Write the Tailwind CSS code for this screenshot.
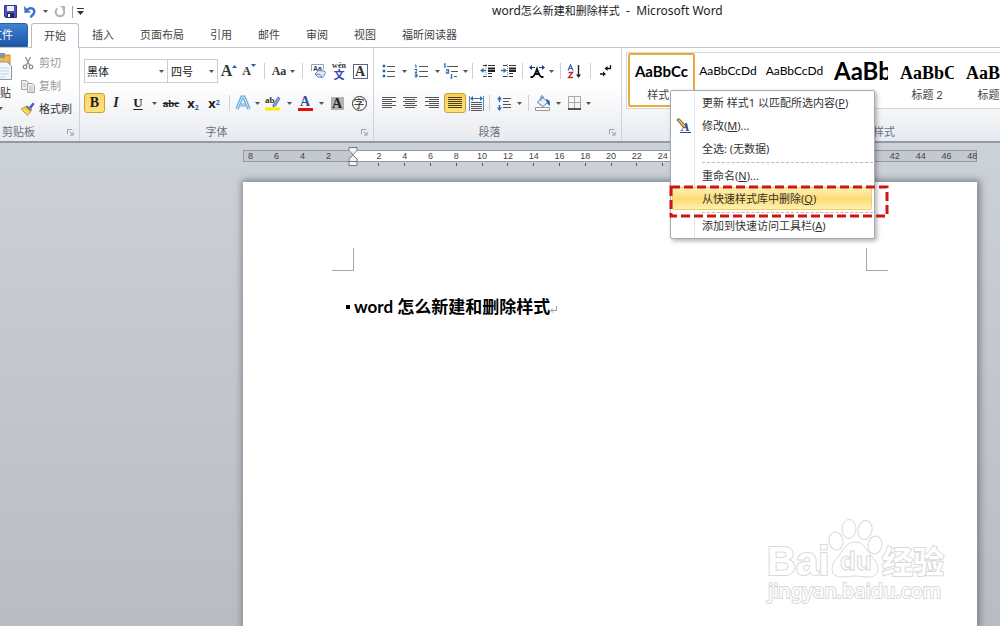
<!DOCTYPE html>
<html lang="zh-CN">

<head>
  <meta charset="UTF-8" />
  <meta name="viewport" content="width=device-width, initial-scale=1.0" />
  <title>word怎么新建和删除样式 - Microsoft Word</title>
  <script src="https://cdn.jsdelivr.net/npm/@tailwindcss/browser@4"></script>
</head>

<body class="h-screen overflow-hidden flex flex-col bg-white text-[#444] text-[11px] leading-4 font-['Noto_Sans','Noto_Sans_CJK_SC',sans-serif]">

  <!-- shared icons -->
  <svg class="hidden">
    <symbol id="arrow" viewBox="0 0 5 3"><path d="M0 0h5L2.500 3z" fill="#555" /></symbol>
    <symbol id="launcher" viewBox="0 0 8 8">
      <path d="M.5 6V.5H6" fill="none" stroke="#8a909b" />
      <path d="M3 3l3 3M7 3.500V7H3.500" fill="none" stroke="#8a909b" />
    </symbol>
  </svg>

  <!-- title bar -->
  <header class="relative h-[23px] shrink-0 flex items-center">
    <div class="flex items-center pl-[3px]">
      <button aria-label="保存" class="w-[14px] h-5 grid place-items-center">
        <svg class="w-[13px] h-[13px]" viewBox="0 0 13 13">
          <path d="M.5.5h12v12h-11l-1-1z" fill="#4b52b8" stroke="#30368c" />
          <path d="M3 1h7v5H3z" fill="#eef2fb" />
          <path d="M3 8h7v5H3z" fill="#25295f" />
          <path d="M4 9h2v3H4z" fill="#fff" />
        </svg>
      </button>
      <button aria-label="撤消" class="w-[26px] h-5 grid place-items-center">
        <svg class="w-3 h-3" viewBox="0 0 12 12">
          <path d="M3 4C6 1 10.500 2 10.300 6c-.3 2.500-2 3.500-4 5.200" fill="none" stroke="#3f74c8" stroke-width="2.400" />
          <path d="M0 0l.5 7 6.500-.5z" fill="#3f74c8" />
        </svg>
      </button>
      <svg class="w-[5px] h-[3px]"><use href="#arrow" /></svg>
      <button aria-label="恢复" class="w-6 h-5 grid place-items-center">
        <svg class="w-3 h-3" viewBox="0 0 12 12">
          <path d="M3.500 2.500a4.300 4.300 0 1 0 5.500.5" fill="none" stroke="#b4b4b4" stroke-width="2" />
          <path d="M6 0h5v5z" fill="#b4b4b4" />
        </svg>
      </button>
      <span class="w-px h-3 bg-gray-400"></span>
      <button aria-label="自定义快速访问工具栏" class="w-[14px] h-5 grid place-items-center">
        <svg class="w-[7px] h-[7px]" viewBox="0 0 7 7"><path d="M0 0h7v1H0zM0 3h7L3.500 7z" fill="#333" /></svg>
      </button>
    </div>
    <h1 class="absolute left-[492px] top-[3px] text-xs text-[#222] whitespace-pre">word<span class="text-[11px]">怎么新建和删除样式</span>  -  Microsoft Word</h1>
  </header>

  <!-- tabs -->
  <nav class="h-[25px] shrink-0 flex items-stretch border-b border-[#c3c7cd]">
    <button class="-ml-6 w-[52px] mr-[3px] rounded-tr-[3px] text-white bg-linear-to-b from-[#3f83d3] to-[#1c55a8] border border-[#2a60aa]">文件</button>
    <button class="w-12 -mb-px rounded-t-[3px] bg-white border border-b-0 border-[#b9bdc4]">开始</button>
    <button class="px-[13px]">插入</button>
    <button class="px-[13px]">页面布局</button>
    <button class="px-[13px]">引用</button>
    <button class="px-[13px]">邮件</button>
    <button class="px-[13px]">审阅</button>
    <button class="px-[13px]">视图</button>
    <button class="px-[13px]">福昕阅读器</button>
  </nav>

  <!-- ribbon -->
  <div class="h-[95px] shrink-0 flex overflow-hidden bg-linear-to-b from-white from-40% to-[#e7eaef] border-b-2 border-[#949aa5]">

    <!-- clipboard -->
    <section class="w-[80px] shrink-0 flex flex-col border-r border-[#cfd3d9]">
      <div class="h-[75px] flex">
        <button class="-ml-3 w-6 pt-1 flex flex-col items-center text-[#333]">
          <svg class="w-6 h-7 shrink-0" viewBox="0 0 24 28">
            <path d="M1 3h21v22H1z" fill="#f3b54c" stroke="#c98a2b" />
            <path d="M7 1h10v5H7z" fill="#8f949c" />
            <path d="M9 10h10l4.500 4v13.500H9z" fill="#f4f8fd" stroke="#8797ad" />
            <path d="M11 16h10M11 19h10M11 22h10M11 25h7" stroke="#c3cfde" />
          </svg>
          <span class="mt-[5px] whitespace-nowrap">粘贴</span>
          <svg class="w-[5px] h-[3px] mt-[6px]"><use href="#arrow" /></svg>
        </button>
        <div class="pl-[9px] pt-[3px] flex flex-col">
          <button class="h-[23px] flex items-center gap-1 text-[#999]">
            <svg class="w-[14px] h-[14px]" viewBox="0 0 14 14" fill="none" stroke="#8d8d8d" stroke-width="1.300">
              <path d="M4.500 1l4.500 9M9.500 1L5 10" />
              <circle cx="4" cy="11" r="1.800" /><circle cx="10" cy="11" r="1.800" />
            </svg>剪切
          </button>
          <button class="h-[23px] flex items-center gap-1 text-[#999]">
            <svg class="w-[14px] h-[14px]" viewBox="0 0 14 14" fill="#eee" stroke="#a5a5a5">
              <path d="M.5 1.500h5l2 2v7h-7z" />
              <path d="M6.500 4.500h5l2 2v7h-7z" />
              <path d="M8 8h4M8 10h4M8 12h4M2 5h3M2 7h3" stroke="#bbb" />
            </svg>复制
          </button>
          <button class="h-[23px] flex items-center gap-1 text-[#333]">
            <svg class="w-[14px] h-[14px]" viewBox="0 0 14 14">
              <path d="M8 5l4-4.500 1.500 1.500L10 7z" fill="#4a5aa8" />
              <path d="M6 3.500L11 8 9.500 9.500 4.500 5z" fill="#666b77" />
              <path d="M4.500 4.500L10 9.500 6.500 13.500 0 7z" fill="#f0cc50" stroke="#b38a28" stroke-width=".7" />
              <path d="M3 7.500l4 4" stroke="#fff3b8" />
            </svg>格式刷
          </button>
        </div>
      </div>
      <div class="h-4 mt-px pl-[2px] pr-[5px] flex items-center justify-between text-[#6b7180]">剪贴板
        <svg class="w-[7px] h-[7px]"><use href="#launcher" /></svg>
      </div>
    </section>

    <!-- font -->
    <section class="w-[294px] shrink-0 pl-1 flex flex-col border-r border-[#cfd3d9]">
      <div class="mt-[11px] h-6 flex items-center text-[#333] font-['Liberation_Serif',serif]">
        <div class="relative w-[84px]">
          <select aria-label="字体" class="w-full h-6 pl-[2px] appearance-none bg-white border border-[#c9cdd4] text-[11px] text-[#222] font-['Noto_Sans_CJK_SC',sans-serif]"><option>黑体</option></select>
          <svg class="absolute right-1 top-[11px] w-[5px] h-[3px]"><use href="#arrow" /></svg>
        </div>
        <div class="relative w-[50px]">
          <select aria-label="字号" class="w-full h-6 pl-[3px] appearance-none bg-white border border-l-0 border-[#c9cdd4] text-[11px] text-[#222] font-['Noto_Sans_CJK_SC',sans-serif]"><option>四号</option></select>
          <svg class="absolute right-1 top-[11px] w-[5px] h-[3px]"><use href="#arrow" /></svg>
        </div>
        <button aria-label="增大字体" class="w-[22px] flex justify-center text-base leading-5 font-bold">A<svg class="w-[5px] h-[3px] mt-1 rotate-180" viewBox="0 0 5 3"><path d="M0 0h5L2.500 3z" fill="#2c5aa8" /></svg></button>
        <button aria-label="缩小字体" class="w-[18px] flex justify-center text-xs font-bold">A<svg class="w-[5px] h-[3px] mt-px" viewBox="0 0 5 3"><path d="M0 0h5L2.500 3z" fill="#2c5aa8" /></svg></button>
        <span class="w-3 flex justify-center"><i class="w-px h-4 bg-[#cdd1d8]"></i></span>
        <button aria-label="更改大小写" class="w-[18px] text-xs font-bold">Aa</button>
        <span class="w-2 flex justify-center"><svg class="w-[5px] h-[3px]"><use href="#arrow" /></svg></span>
        <span class="w-3 flex justify-center"><i class="w-px h-4 bg-[#cdd1d8]"></i></span>
        <button aria-label="清除格式" class="w-5 flex justify-center">
          <svg class="w-4 h-4" viewBox="0 0 16 16">
            <path d="M1.500 8V1.500h12v5" fill="none" stroke="#8fa3bd" />
            <text x="3" y="8" font-size="7" font-weight="bold" fill="#345" font-family="'Liberation Sans', sans-serif">Aa</text>
            <path d="M5 11l3.500-3.500L14 8c2 .5 1.500 2.500.5 4l-2 2.500L8 14z" fill="#dfe9f8" stroke="#6d88b8" />
            <path d="M5 11l5 .5 2 3" fill="none" stroke="#6d88b8" />
          </svg>
        </button>
        <button aria-label="拼音指南" class="w-[22px] flex flex-col items-center leading-none">
          <span class="h-[6px] text-[8px] leading-[6px] font-bold">wén</span>
          <span class="h-[11px] text-[11px] leading-[11px] font-bold text-[#3a48b0] font-['Noto_Sans_CJK_SC',sans-serif]">文</span>
        </button>
        <button aria-label="字符边框" class="w-5 flex justify-center"><span class="w-[15px] h-[15px] border border-[#556a80] text-sm leading-[14px] font-bold">A</span></button>
      </div>
      <div class="mt-[10px] h-5 flex items-center text-[#222] font-['Liberation_Serif',serif]">
        <button aria-label="加粗" class="w-[21px] h-5 rounded-[3px] border border-[#c9a13c] bg-linear-to-b from-[#fbd767] to-[#ffe27a] text-sm leading-4 font-black">B</button>
        <button aria-label="倾斜" class="w-[22px] text-sm italic font-bold">I</button>
        <button aria-label="下划线" class="w-[22px] text-[13px] font-bold underline underline-offset-2">U</button>
        <span class="w-[10px] flex justify-center"><svg class="w-[5px] h-[3px]"><use href="#arrow" /></svg></span>
        <button aria-label="删除线" class="w-6 text-[11px] font-bold line-through">abc</button>
        <button aria-label="下标" class="w-5 text-[13px] font-bold font-['Noto_Sans',sans-serif]">x<sub class="text-[7px] text-[#2c5aa8]">2</sub></button>
        <button aria-label="上标" class="w-[22px] text-[13px] font-bold font-['Noto_Sans',sans-serif]">x<sup class="text-[7px] text-[#2c5aa8]">2</sup></button>
        <span class="w-2 flex justify-center"><i class="w-px h-4 bg-[#cdd1d8]"></i></span>
        <button aria-label="文本效果" class="w-5 flex justify-center">
          <svg class="w-4 h-4" viewBox="0 0 16 16" fill="none" stroke-linejoin="round">
            <path d="M2 14L7 2h2l5 12M5 10h6" stroke="#a8d0ee" stroke-width="4" />
            <path d="M2 14L7 2h2l5 12M5 10h6" stroke="#4a94cf" stroke-width="2.200" />
            <path d="M2 14L7 2h2l5 12M5 10h6" stroke="#eef7fd" />
          </svg>
        </button>
        <span class="w-2 flex justify-center"><svg class="w-[5px] h-[3px]"><use href="#arrow" /></svg></span>
        <button aria-label="突出显示" class="w-6 flex justify-center">
          <svg class="w-4 h-4" viewBox="0 0 16 16">
            <text x="0" y="8" font-size="9" font-weight="bold" fill="#333">ab</text>
            <path d="M8 10l5-8 2 1.500-4.500 7.500L8 12z" fill="#8ba4cf" stroke="#4d6699" stroke-width=".8" />
            <path d="M0 12.500h15v3H0z" fill="#f7ee00" />
          </svg>
        </button>
        <span class="w-2 flex justify-center"><svg class="w-[5px] h-[3px]"><use href="#arrow" /></svg></span>
        <button aria-label="字体颜色" class="w-6 flex flex-col items-center">
          <span class="h-3 text-sm leading-3 font-bold text-[#2f4f8f]">A</span>
          <span class="w-[15px] h-[3px] bg-[#e80c0c]"></span>
        </button>
        <span class="w-2 flex justify-center"><svg class="w-[5px] h-[3px]"><use href="#arrow" /></svg></span>
        <button aria-label="字符底纹" class="w-6 flex justify-center"><span class="w-[13px] h-[13px] bg-[#b3b3b3] text-sm leading-[13px] font-bold">A</span></button>
        <button aria-label="带圈字符" class="w-5 flex justify-center"><span class="w-[15px] h-[15px] rounded-full border border-[#333] text-[11px] leading-[12px] font-['Noto_Sans_CJK_SC',sans-serif]">字</span></button>
      </div>
      <div class="mt-[11px] h-4 pr-[5px] flex items-center text-[#6b7180]">
        <span class="grow pr-3 text-center">字体</span>
        <svg class="w-[7px] h-[7px]"><use href="#launcher" /></svg>
      </div>
    </section>

    <!-- paragraph -->
    <section class="w-[248px] shrink-0 pl-1 flex flex-col border-r border-[#cfd3d9]">
      <div class="mt-[11px] h-6 flex items-center">
        <button aria-label="项目符号" class="w-[22px] flex justify-center">
          <svg class="w-[14px] h-[14px]" viewBox="0 0 14 14">
            <path d="M1 1h2v2H1zM1 6h2v2H1zM1 11h2v2H1z" fill="#2f5fb0" stroke="#2f5fb0" stroke-width=".6" />
            <path d="M5 2.500h8M5 7.500h8M5 12.500h8" stroke="#555" />
          </svg>
        </button>
        <span class="w-2 flex justify-center"><svg class="w-[5px] h-[3px]"><use href="#arrow" /></svg></span>
        <button aria-label="编号" class="w-[26px] flex justify-center">
          <svg class="w-[14px] h-[14px]" viewBox="0 0 14 14" fill="none">
            <path d="M1 1h1v3M.5 5.500H3v1.200L1 8.500h2M.5 10H3v3H.5M1 11.500h2" stroke="#2f5fb0" />
            <path d="M5 2.500h9M5 7.500h9M5 12.500h9" stroke="#555" />
          </svg>
        </button>
        <span class="w-[6px] flex justify-center"><svg class="w-[5px] h-[3px]"><use href="#arrow" /></svg></span>
        <button aria-label="多级列表" class="w-[22px] flex justify-center">
          <svg class="w-4 h-4" viewBox="0 0 16 16" fill="none">
            <path d="M1 1h1v4M3 7h2.500v3H3.500V8.500M8.500 11v4M7.500 15h2" stroke="#2f6fc0" stroke-width="1.300" />
            <path d="M4 3.500h11M8 8.500h7M11 13.500h3" stroke="#555" />
          </svg>
        </button>
        <span class="w-[6px] flex justify-center"><svg class="w-[5px] h-[3px]"><use href="#arrow" /></svg></span>
        <span class="w-2 flex justify-center"><i class="w-px h-4 bg-[#cdd1d8]"></i></span>
        <button aria-label="减少缩进量" class="w-[22px] flex justify-center">
          <svg class="w-[15px] h-[14px]" viewBox="0 0 15 14">
            <path d="M3 1.500h4M8 1.500h7M3 12.500h4M8 12.500h4M8 9.500h4" stroke="#333" />
            <path d="M8 4.500h7M8 7h7" stroke="#222" stroke-width="2" />
            <path d="M6 0v14" stroke="#888" stroke-dasharray="1 1" />
            <path d="M0 6.500L3.500 4v5z" fill="#2f6fc0" /><path d="M2 6.500h4" stroke="#2f6fc0" stroke-width="1.500" />
          </svg>
        </button>
        <button aria-label="增加缩进量" class="w-5 flex justify-center">
          <svg class="w-[15px] h-[14px]" viewBox="0 0 15 14">
            <path d="M2 1.500h4M8 1.500h7M2 12.500h4M8 12.500h4M8 9.500h4" stroke="#333" />
            <path d="M8 4.500h7M8 7h7" stroke="#222" stroke-width="2" />
            <path d="M6.500 0v14" stroke="#888" stroke-dasharray="1 1" />
            <path d="M6 6.500L2.500 4v5z" fill="#2f6fc0" /><path d="M0 6.500h4" stroke="#2f6fc0" stroke-width="1.500" />
          </svg>
        </button>
        <span class="w-2 flex justify-center"><i class="w-px h-4 bg-[#cdd1d8]"></i></span>
        <button aria-label="中文版式" class="w-[22px] flex justify-center">
          <svg class="w-4 h-[13px]" viewBox="0 0 16 13" fill="none">
            <path d="M1.500 12h2c2-1 3.500-5 4.500-8 1 3 2.500 7 4.500 8h2M5 9h6" stroke="#111" stroke-width="1.900" />
            <path d="M0 2.500L3 0v5zM16 2.500L13 0v5z" fill="#23358a" /><path d="M2 2.500h4M10 2.500h4" stroke="#23358a" />
          </svg>
        </button>
        <span class="w-[6px] flex justify-center"><svg class="w-[5px] h-[3px]"><use href="#arrow" /></svg></span>
        <span class="w-3 flex justify-center"><i class="w-px h-4 bg-[#cdd1d8]"></i></span>
        <button aria-label="排序" class="w-4 flex justify-center">
          <svg class="w-[15px] h-[15px]" viewBox="0 0 15 15" fill="none">
            <path d="M1 6.500L3.500 1 6 6.500M2 4.500h3" stroke="#2f5fb0" stroke-width="1.200" />
            <path d="M1.500 8.500h4l-4 5h4.500" stroke="#b03030" stroke-width="1.300" />
            <path d="M11.500 1v11" stroke="#222" stroke-width="1.400" /><path d="M9 10.500h5L11.500 14z" fill="#222" />
          </svg>
        </button>
        <span class="w-4 flex justify-center"><i class="w-px h-4 bg-[#cdd1d8]"></i></span>
        <button aria-label="显示编辑标记" class="w-4 flex justify-center">
          <svg class="w-3 h-3" viewBox="0 0 12 12" fill="none" stroke="#111" stroke-width="1.300">
            <path d="M10.500 0v3.500H6M0 9h4" /><path d="M7.500 1L4.500 3.500l3 2.500zM3 6.500L6 9l-3 2.500z" fill="#111" stroke="none" />
          </svg>
        </button>
      </div>
      <div class="mt-[10px] h-5 flex items-center">
        <button aria-label="左对齐" class="w-[22px] flex justify-center"><svg class="w-[14px] h-[12px]" viewBox="0 0 14 12"><path d="M0 .5h14M0 2.500h10M0 4.500h14M0 6.500h10M0 8.500h14M0 10.500h10" stroke="#555" /></svg></button>
        <button aria-label="居中" class="w-5 flex justify-center"><svg class="w-[14px] h-[12px]" viewBox="0 0 14 12"><path d="M0 .5h14M2 2.500h10M0 4.500h14M2 6.500h10M0 8.500h14M2 10.500h10" stroke="#555" /></svg></button>
        <button aria-label="右对齐" class="w-6 flex justify-center"><svg class="w-[14px] h-[12px]" viewBox="0 0 14 12"><path d="M0 .5h14M4 2.500h10M0 4.500h14M4 6.500h10M0 8.500h14M4 10.500h10" stroke="#555" /></svg></button>
        <button aria-label="两端对齐" class="w-[22px] h-5 flex justify-center items-center rounded-[3px] border border-[#c9a13c] bg-linear-to-b from-[#fbd04f] to-[#ffe27a]"><svg class="w-[14px] h-[12px]" viewBox="0 0 14 12"><path d="M0 .5h14M0 2.500h14M0 4.500h14M0 6.500h14M0 8.500h14M0 10.500h14" stroke="#4a4020" /></svg></button>
        <button aria-label="分散对齐" class="w-5 flex justify-center">
          <svg class="w-[15px] h-[15px]" viewBox="0 0 15 15">
            <path d="M.5 0v15M14.500 0v15" stroke="#5c86c6" /><path d="M2 2.500h11" stroke="#2f6fc0" /><path d="M1 2.500L4 0v5zM14 2.500L11 0v5z" fill="#2f6fc0" />
            <path d="M2 6.500h11M2 8.500h11M2 10.500h11M2 12.500h11M2 14.500h11" stroke="#555" />
          </svg>
        </button>
        <span class="w-[6px] flex justify-center"><i class="w-px h-4 bg-[#cdd1d8]"></i></span>
        <button aria-label="行距" class="w-6 flex justify-center">
          <svg class="w-[14px] h-[15px]" viewBox="0 0 14 15">
            <path d="M2.500 0L5 3.500H0zM2.500 15L5 11.500H0z" fill="#2f6fc0" /><path d="M2.500 3v3M2.500 9v3" stroke="#2f6fc0" stroke-width="1.500" />
            <path d="M6 2.500h8M6 5.500h6M6 8.500h8M6 11.500h8" stroke="#555" />
          </svg>
        </button>
        <span class="w-[6px] flex justify-center"><svg class="w-[5px] h-[3px]"><use href="#arrow" /></svg></span>
        <span class="w-3 flex justify-center"><i class="w-px h-4 bg-[#cdd1d8]"></i></span>
        <button aria-label="底纹" class="w-[18px] flex justify-center">
          <svg class="w-4 h-4" viewBox="0 0 16 16">
            <path d="M7 2l6 5-5 4.500-5.500-4z" fill="#e9f1fb" stroke="#4f79b8" /><path d="M6 6V1.500c0-1 2-1 2 0V4" fill="none" stroke="#6b7f9c" />
            <path d="M11 4c4 1 4.500 3 3.500 7L12 8z" fill="#2f5fb0" />
            <path d="M.5 12.500h14v3H.5z" fill="#fafafa" stroke="#999" />
          </svg>
        </button>
        <span class="w-3 flex justify-center"><svg class="w-[5px] h-[3px]"><use href="#arrow" /></svg></span>
        <button aria-label="框线" class="w-5 flex justify-center">
          <svg class="w-[13px] h-[14px]" viewBox="0 0 13 14" fill="none"><path d="M.5 13V.5h12V13M6.500 1v12M1 6.500h11" stroke="#aaa" /><path d="M0 13h13" stroke="#222" stroke-width="1.500" /></svg>
        </button>
        <span class="w-2 flex justify-center"><svg class="w-[5px] h-[3px]"><use href="#arrow" /></svg></span>
      </div>
      <div class="mt-[11px] h-4 pr-[5px] flex items-center text-[#6b7180]">
        <span class="grow pr-2 text-center">段落</span>
        <svg class="w-[7px] h-[7px]"><use href="#launcher" /></svg>
      </div>
    </section>

    <!-- styles gallery -->
    <section class="grow min-w-0 flex flex-col">
      <div class="mt-1 ml-1 h-[57px] pl-px flex overflow-hidden bg-white border border-r-0 border-[#d5d8de] text-black font-['Lato','Noto_Sans_CJK_SC',sans-serif]">
        <button class="w-[67px] shrink-0 h-[54px] flex flex-col items-center border-2 border-[#e5ad3c] rounded-[2px]">
          <span class="h-8 leading-8 text-[15px] font-bold">AaBbCc</span><span class="text-[#444]">样式1</span>
        </button>
        <button aria-label="正文" class="w-[66px] shrink-0 pt-[2px] flex flex-col items-center">
          <span class="h-8 leading-8 text-xs">AaBbCcDd</span>
        </button>
        <button aria-label="无间隔" class="w-[67px] shrink-0 pt-[2px] flex flex-col items-center">
          <span class="h-8 leading-8 text-xs">AaBbCcDd</span>
        </button>
        <button aria-label="标题 1" class="w-[66px] shrink-0 px-[6px] pt-[2px] flex flex-col items-center">
          <span class="w-full h-8 leading-8 text-2xl font-bold overflow-hidden text-left">AaBb</span>
        </button>
        <button class="w-[66px] shrink-0 px-[6px] pt-[2px] flex flex-col items-center">
          <span class="w-full h-8 leading-9 text-lg font-bold overflow-hidden text-left font-['Liberation_Serif',serif]">AaBbCc</span><span class="text-[#444]">标题 2</span>
        </button>
        <button class="w-[66px] shrink-0 px-[6px] pt-[2px] flex flex-col items-center">
          <span class="w-full h-8 leading-9 text-lg font-bold overflow-hidden text-left font-['Liberation_Serif',serif]">AaBbCc</span><span class="text-[#444]">标题 3</span>
        </button>
      </div>
      <div class="mt-[15px] h-4 pl-[251px] flex items-center text-[#6b7180]">样式</div>
    </section>
  </div>

  <!-- workspace -->
  <main class="grow min-h-0 flex flex-col pl-[243px] pr-[23px] bg-linear-to-b from-[#cdd1d8] to-[#b9bcc1]">
    <div class="relative mt-[7px] h-[32px] shrink-0">
      <div class="h-[18px] flex overflow-hidden text-[9px] leading-[10px] text-[#444] font-['Liberation_Sans',sans-serif]">
        <div id="rulerLeft" class="w-[110px] h-3 shrink-0 flex pr-3 border border-r-0 border-[#9399a3] bg-[#c3c8d1]"></div>
        <div class="grow h-3 border border-l-0 border-[#9399a3] bg-[linear-gradient(to_right,#fff_513px,#c3c8d1_513px)]">
          <div id="rulerRight" class="flex pl-[13px] -mr-[9px]"></div>
        </div>
      </div>
      <!-- indent markers -->
      <svg class="absolute left-[105px] -top-[3px] w-[10px] h-[20px]" viewBox="0 0 10 20" fill="#f4f4f4" stroke="#777">
        <path d="M1 .5h8v3L5 7.500 1 3.500z" /><path d="M5 8l4 4v2.500H1V12z" /><path d="M1 14.500h8v4H1z" />
      </svg>
    </div>

    <article class="relative grow bg-white pt-[66px] shadow-[1px_0_7px_2px_#7c828a]">
      <!-- margin corners -->
      <div class="flex justify-between pl-[89px] pr-[89px]">
        <span class="w-[22px] h-[23px] border-r border-b border-[#a8a8a8]"></span>
        <span class="w-[22px] h-[23px] border-l border-b border-[#a8a8a8]"></span>
      </div>
      <h2 class="mt-6 pl-[103px] flex items-center text-[17px] leading-6 font-bold text-black whitespace-pre">
        <span class="w-[4px] h-[4px] mr-1 bg-black"></span><span class="font-['Lato',sans-serif]">word </span>怎么新建和删除样式<svg class="w-[7px] h-[7px] mt-1" viewBox="0 0 7 7" fill="none" stroke="#999"><path d="M6.500 0v4.500H1M3 2.500l-2 2 2 2" /></svg>
      </h2>

      <!-- watermark -->
      <svg class="absolute right-[26px] bottom-[16px] w-[190px] h-[96px]" viewBox="0 0 190 96" fill="#fff" stroke="#d9d9d9" stroke-width="1" font-family="'Liberation Sans', 'Noto Sans CJK SC', sans-serif">
        <g paint-order="stroke" stroke-width="2">
          <text x="6" y="61" font-size="40" font-weight="bold">Bai</text>
          <text x="121" y="59" font-size="31" font-weight="bold" font-family="'Noto Sans CJK SC', sans-serif">经验</text>
          <text x="7" y="84" font-size="20" font-family="'Noto Sans', sans-serif">jingyan.baidu.com</text>
        </g>
        <ellipse cx="75" cy="27" rx="7" ry="9" transform="rotate(-12 75 27)" />
        <ellipse cx="88" cy="15" rx="7" ry="9.500" />
        <ellipse cx="104" cy="16" rx="7" ry="9.500" transform="rotate(12 104 16)" />
        <ellipse cx="114" cy="31" rx="7" ry="9" transform="rotate(12 114 31)" />
        <path d="M94 28c9 0 12 9 18 16 8 9 6 19-4 19-6 0-9-1-14-1s-8 1-14 1c-10 0-12-10-4-19 6-7 9-16 18-16z" />
        <text x="79" y="56" font-size="26" font-weight="bold" font-family="'Liberation Sans', sans-serif">du</text>
      </svg>
    </article>
  </main>

  <!-- style context menu -->
  <div role="menu" class="absolute left-[670px] top-[90px] w-[205px] h-[149px] px-px flex flex-col bg-white bg-[linear-gradient(to_right,transparent_23px,#e4e6ea_23px,#e4e6ea_24px,transparent_24px)] border border-[#a7abb0] rounded-[2px] shadow-[2px_2px_4px_rgba(0,0,0,0.3)] text-[#333]">
    <button role="menuitem" class="h-[23px] pl-[30px] text-left whitespace-nowrap">更新 样式1 以匹配所选内容(<u>P</u>)</button>
    <button role="menuitem" class="h-[23px] flex items-center text-left">
      <svg class="w-4 h-4 ml-1 mr-[10px]" viewBox="0 0 16 16">
        <text x="5" y="13" font-size="13" font-weight="bold" font-style="italic" fill="#2a49a5" font-family="'Liberation Serif', serif">A</text>
        <path d="M4 14.500h11" stroke="#2a49a5" />
        <path d="M1 2l2-1.500L10 8l-.5 2-2-.5z" fill="#e7b765" stroke="#5c3d1c" stroke-width=".9" />
      </svg>
      <span>修改(<u>M</u>)...</span>
    </button>
    <button role="menuitem" class="h-[23px] pl-[30px] text-left">全选: (无数据)</button>
    <hr class="ml-[30px] mt-[2px] mb-px border-0 border-t border-dashed border-[#bbb]" />
    <button role="menuitem" class="h-[23px] pl-[30px] text-left">重命名(<u>N</u>)...</button>
    <button role="menuitem" class="h-[23px] mr-px pl-[29px] text-left rounded-[2px] border border-[#f0cf6a] bg-linear-to-b from-[#fdf0b8] via-[#fcdc72] to-[#fff0b0]">从快速样式库中删除(<u>Q</u>)</button>
    <hr class="ml-[30px] mt-[2px] mb-px border-0 border-t border-dashed border-[#bbb]" />
    <button role="menuitem" class="h-[23px] pl-[30px] text-left">添加到快速访问工具栏(<u>A</u>)</button>
  </div>

  <!-- callout round the delete command -->
  <svg class="absolute left-[669px] top-[185px] w-[220px] h-[33px] pointer-events-none">
    <rect x="2" y="2" width="216" height="29" fill="none" stroke="#d01414" stroke-width="3" stroke-dasharray="9 4" />
  </svg>

  <script>
    const rulerLeft = document.getElementById("rulerLeft");
    const rulerRight = document.getElementById("rulerRight");

    function addMark(parent, value, cls, tick) {
      const mark = document.createElement("span");
      mark.className = cls;
      mark.textContent = value;
      if (tick) {
        const line = document.createElement("i");
        line.className = "w-px h-[3px] mt-[2px] bg-[#555]";
        mark.appendChild(line);
      }
      parent.appendChild(mark);
    }

    for (let i = 8; i > 0; i -= 2) {
      addMark(rulerLeft, i, "w-[26px] pl-1 shrink-0", false);
    }
    for (let i = 2; i <= 48; i += 2) {
      addMark(rulerRight, i, "flex-1 flex flex-col items-center", i < 40);
    }
  </script>
</body>

</html>
